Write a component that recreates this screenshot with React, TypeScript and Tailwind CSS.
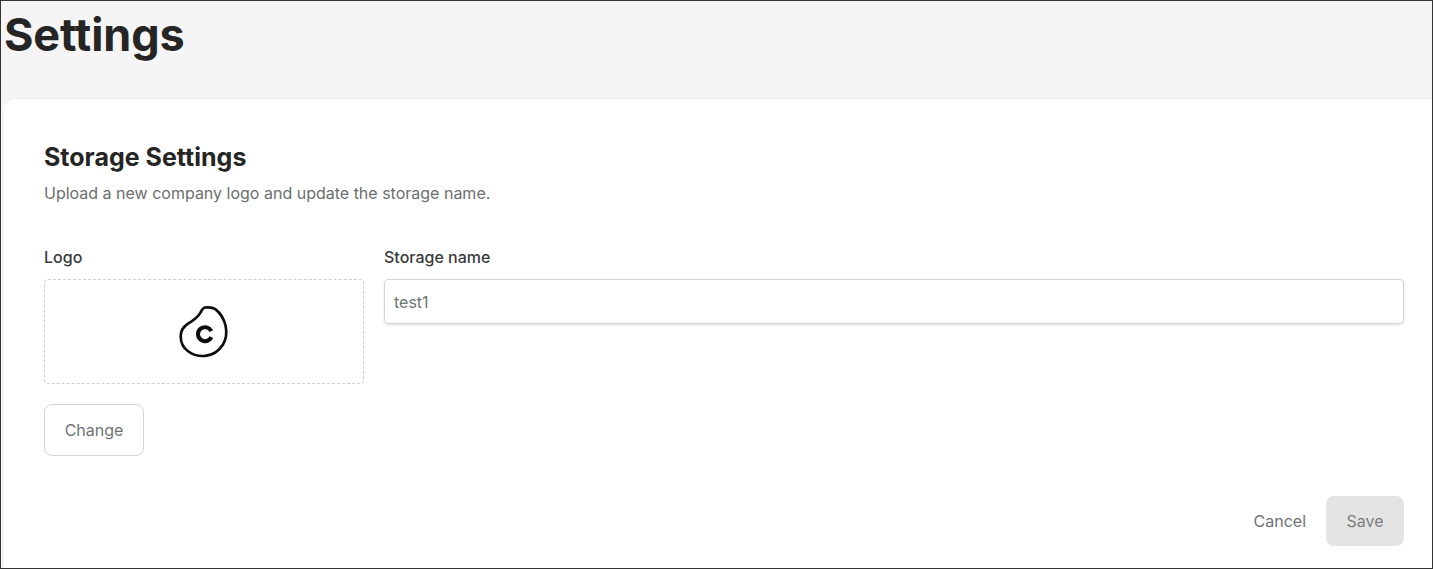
const font = { fontFamily: "Inter, sans-serif" };

function CompanyLogo() {
  return (
    <svg width="110" height="90" viewBox="-3 4.5 330 270" fill="none">
      <path
        d="M165 66C175 65 188 65 196 71C210 82 222 100 227 122C231 142 229 160 219 177C207 196 190 209 166 211C148 213 130 209 115 198C100 187 92 170 92 152C92 135 100 124 113 115C130 105 143 96 151 82C155 74 159 67 165 66Z"
        stroke="#0d0d0d"
        strokeWidth="8"
      />
      <path d="M184 137A21 21 0 1 0 184 155" stroke="#0d0d0d" strokeWidth="12" />
    </svg>
  );
}

export default function App() {
  return (
    <div style={font} className="h-[569px] border border-[#333333] bg-[#f5f5f5] flex flex-col overflow-hidden">
      <h1 className="h-[97px] pl-[3px] pt-[4px] text-[45px] leading-[60px] font-bold text-[#252525] tracking-[-0.1px]">
        Settings
      </h1>
      <div className="flex-1 ml-[3px] bg-white rounded-tl-xl border-t border-[#efefef] pl-10 pr-[28px] pt-10 pb-[22px] flex flex-col">
        <h2 className="text-[25px] leading-9 font-bold text-[#252525]">Storage Settings</h2>
        <p className="mt-[6px] text-base leading-6 text-[#6b6f6d]">
          Upload a new company logo and update the storage name.
        </p>
        <div className="mt-[40px] flex gap-5">
          <div className="w-[320px] shrink-0">
            <label className="block text-base leading-6 font-medium text-[#3a3a3a]">Logo</label>
            <div className="mt-[10px] h-[105px] border border-dashed border-[#cfcfcf] rounded flex items-center justify-center">
              <CompanyLogo />
            </div>
            <button className="mt-5 w-[100px] h-[52px] border border-[#d4d4d4] rounded-lg text-base text-[#6f7375]">
              Change
            </button>
          </div>
          <div className="flex-1">
            <label className="block text-base leading-6 font-medium text-[#3a3a3a]">Storage name</label>
            <input
              readOnly
              value="test1"
              className="mt-[10px] w-full h-[45px] px-[9px] border border-[#d4d4d4] rounded shadow-sm text-base text-[#6b7775] outline-none"
            />
          </div>
        </div>
        <div className="mt-auto flex items-center justify-end gap-5">
          <button className="text-base text-[#6f7375]">Cancel</button>
          <button className="w-[78px] h-[50px] rounded-lg bg-[#e4e4e4] text-base text-[#7d7d7d]">Save</button>
        </div>
      </div>
    </div>
  );
}
